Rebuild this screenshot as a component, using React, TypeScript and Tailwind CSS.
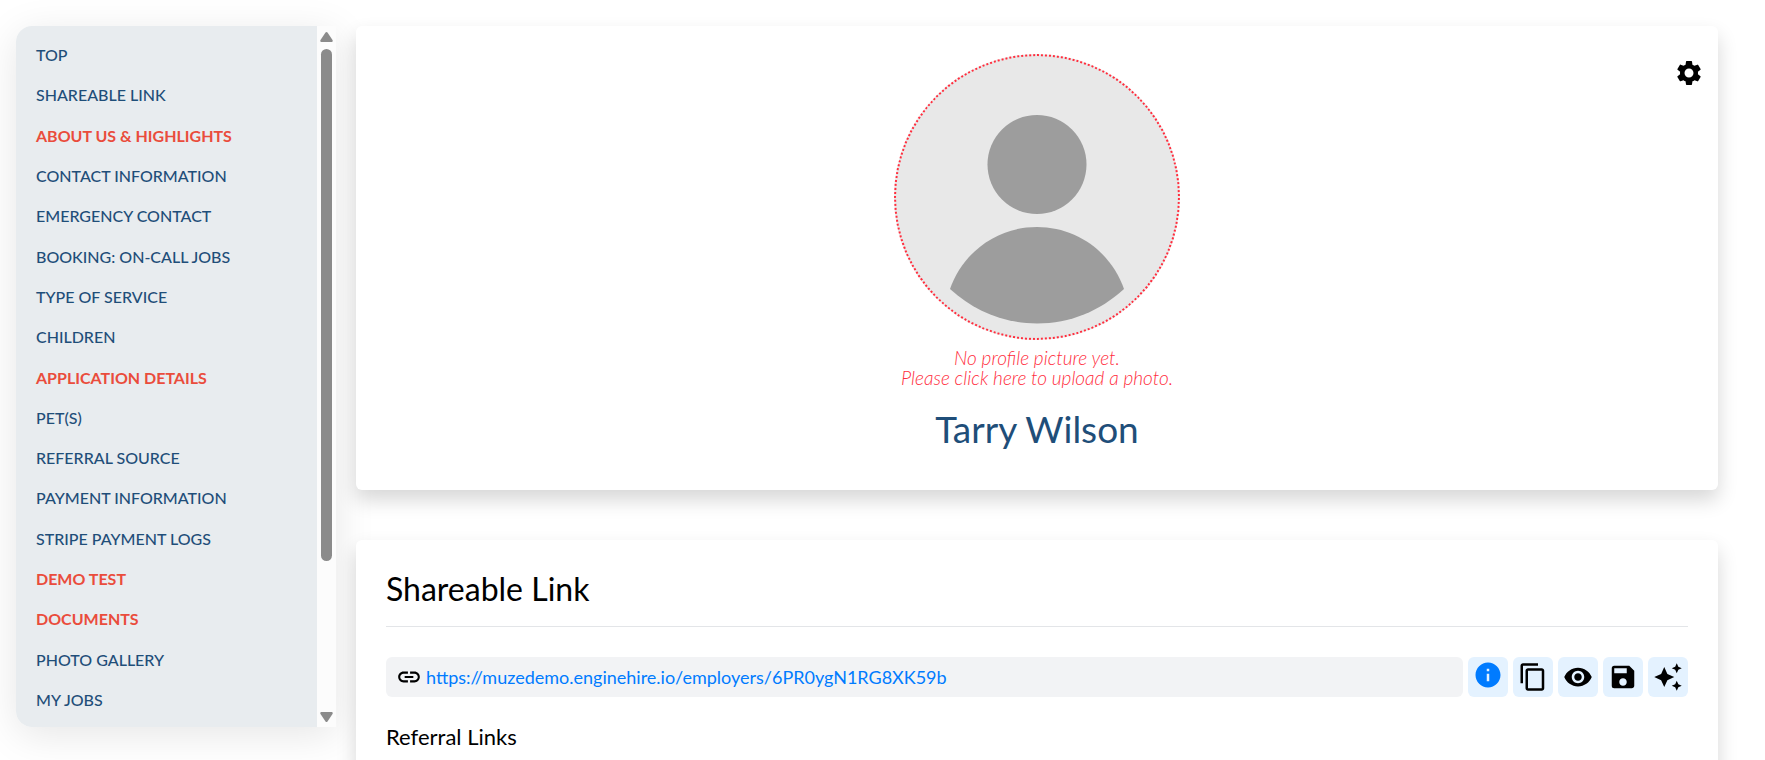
import { useState } from 'react';
import {
    MdAutoAwesome,
    MdContentCopy,
    MdInfo,
    MdLink,
    MdRemoveRedEye,
    MdSave,
    MdSettings,
} from 'react-icons/md';

type NavItem = { label: string; incomplete?: boolean };

const navItems: NavItem[] = [
    { label: 'TOP' },
    { label: 'SHAREABLE LINK' },
    { label: 'ABOUT US & HIGHLIGHTS', incomplete: true },
    { label: 'CONTACT INFORMATION' },
    { label: 'EMERGENCY CONTACT' },
    { label: 'BOOKING: ON-CALL JOBS' },
    { label: 'TYPE OF SERVICE' },
    { label: 'CHILDREN' },
    { label: 'APPLICATION DETAILS', incomplete: true },
    { label: 'PET(S)' },
    { label: 'REFERRAL SOURCE' },
    { label: 'PAYMENT INFORMATION' },
    { label: 'STRIPE PAYMENT LOGS' },
    { label: 'DEMO TEST', incomplete: true },
    { label: 'DOCUMENTS', incomplete: true },
    { label: 'PHOTO GALLERY' },
    { label: 'MY JOBS' },
];

const shareUrl = 'https://muzedemo.enginehire.io/employers/6PR0ygN1RG8XK59b';

function toAnchor(label: string) {
    return '#' + label.toLowerCase().replace(/[^a-z]+/g, '-');
}

function Sidebar() {
    return (
        <aside className="flex h-[calc(100vh-59px)] w-80 shrink-0 overflow-hidden rounded-l-2xl bg-[#e8ecef]">
            <nav className="flex flex-1 flex-col pt-[9px] pb-[7px]">
                {navItems.map((item) => (
                    <a
                        key={item.label}
                        href={toAnchor(item.label)}
                        className={`flex flex-1 items-center px-5 text-base ${
                            item.incomplete ? 'font-bold text-[#ea4c3c]' : 'font-medium text-[#1f4e79]'
                        }`}
                    >
                        {item.label}
                    </a>
                ))}
            </nav>
            <div className="flex w-[19px] flex-col items-center gap-[7px] bg-[#fcfcfc] pt-1.5 pb-[5px]">
                <svg viewBox="0 0 13 10" className="h-2.5 w-[13px] shrink-0" fill="#8b8b8b">
                    <path d="M5.5.6a1.3 1.3 0 0 1 2 0l5 7.4c.6 1-.1 2-1 2h-10c-.9 0-1.6-1-1-2z" />
                </svg>
                <div className="flex w-[11px] flex-1 flex-col">
                    <div className="h-[78%] rounded-full bg-[#8b8b8b]" />
                </div>
                <svg viewBox="0 0 13 10" className="h-2.5 w-[13px] shrink-0" fill="#8b8b8b">
                    <path d="M5.5 9.4a1.3 1.3 0 0 0 2 0l5-7.4c.6-1-.1-2-1-2h-10c-.9 0-1.6 1-1 2z" />
                </svg>
            </div>
        </aside>
    );
}

function ProfileCard() {
    return (
        <section className="relative flex justify-center rounded-md bg-white px-4 pt-7 pb-[38px] shadow-[0_10px_20px_rgba(0,0,0,0.16)]">
            <button type="button" aria-label="Settings" className="absolute top-8 right-3.5">
                <MdSettings size={30} />
            </button>
            <div className="flex flex-col items-center">
                <button type="button" className="flex flex-col items-center text-[#ff2d3d]">
                    <svg
                        viewBox="0 0 282 282"
                        className="size-[286px] rounded-full border-2 border-dotted border-[#ff2d3d] bg-[#e8e8e8]"
                    >
                        <circle cx="141" cy="108.5" r="49.5" fill="#9d9d9d" />
                        <path d="M54 233C67 196 101 171 141 171s74 25 87 62c-24 22-54 34.5-87 34.5S78 255 54 233z" fill="#9d9d9d" />
                    </svg>
                    <span className="mt-2 text-[19px] leading-5 font-light italic">
                        No profile picture yet.
                        <br />
                        Please click here to upload a photo.
                    </span>
                </button>
                <h1 className="mt-[18px] text-[37px] leading-[46px] text-[#1f4e79]">Tarry Wilson</h1>
            </div>
        </section>
    );
}

function ShareableLinkCard() {
    const [copied, setCopied] = useState(false);

    const actions = [
        { name: 'Information', icon: <MdInfo size={30} className="mb-1 text-[#007bff]" /> },
        { name: copied ? 'Copied' : 'Copy link', icon: <MdContentCopy size={30} />, onClick: () => setCopied(true) },
        { name: 'Preview', icon: <MdRemoveRedEye size={30} /> },
        { name: 'Save', icon: <MdSave size={30} /> },
        { name: 'Generate', icon: <MdAutoAwesome size={30} /> },
    ];

    return (
        <section className="grow rounded-md bg-white px-[30px] pt-[30px] pb-10 shadow-[0_10px_20px_rgba(0,0,0,0.16)]">
            <h2 className="border-b border-[#e3e5e8] pb-[18px] text-[32px] leading-[38px]">Shareable Link</h2>
            <div className="mt-[30px] flex gap-[5px]">
                <div className="flex h-10 flex-1 items-center gap-1 rounded-md bg-[#f2f3f5] px-2.5">
                    <MdLink size={26} />
                    <a href={shareUrl} className="text-lg text-[#007bff]">{shareUrl}</a>
                </div>
                {actions.map((action) => (
                    <button
                        key={action.name}
                        type="button"
                        aria-label={action.name}
                        onClick={action.onClick}
                        className="flex size-10 items-center justify-center rounded-md bg-[#e4f2ff]"
                    >
                        {action.icon}
                    </button>
                ))}
            </div>
            <h3 className="mt-[26px] text-[22px] leading-7">Referral Links</h3>
        </section>
    );
}

export default function App() {
    return (
        <div className="flex h-screen items-start gap-5 overflow-hidden bg-white pt-[26px] pr-[47px] pl-4 font-['Lato',sans-serif] text-black">
            <div className="rounded-l-2xl shadow-[0_8px_40px_rgba(0,0,0,0.1)]">
                <Sidebar />
            </div>
            <main className="flex h-full flex-1 flex-col gap-[50px]">
                <ProfileCard />
                <ShareableLinkCard />
            </main>
        </div>
    );
}
